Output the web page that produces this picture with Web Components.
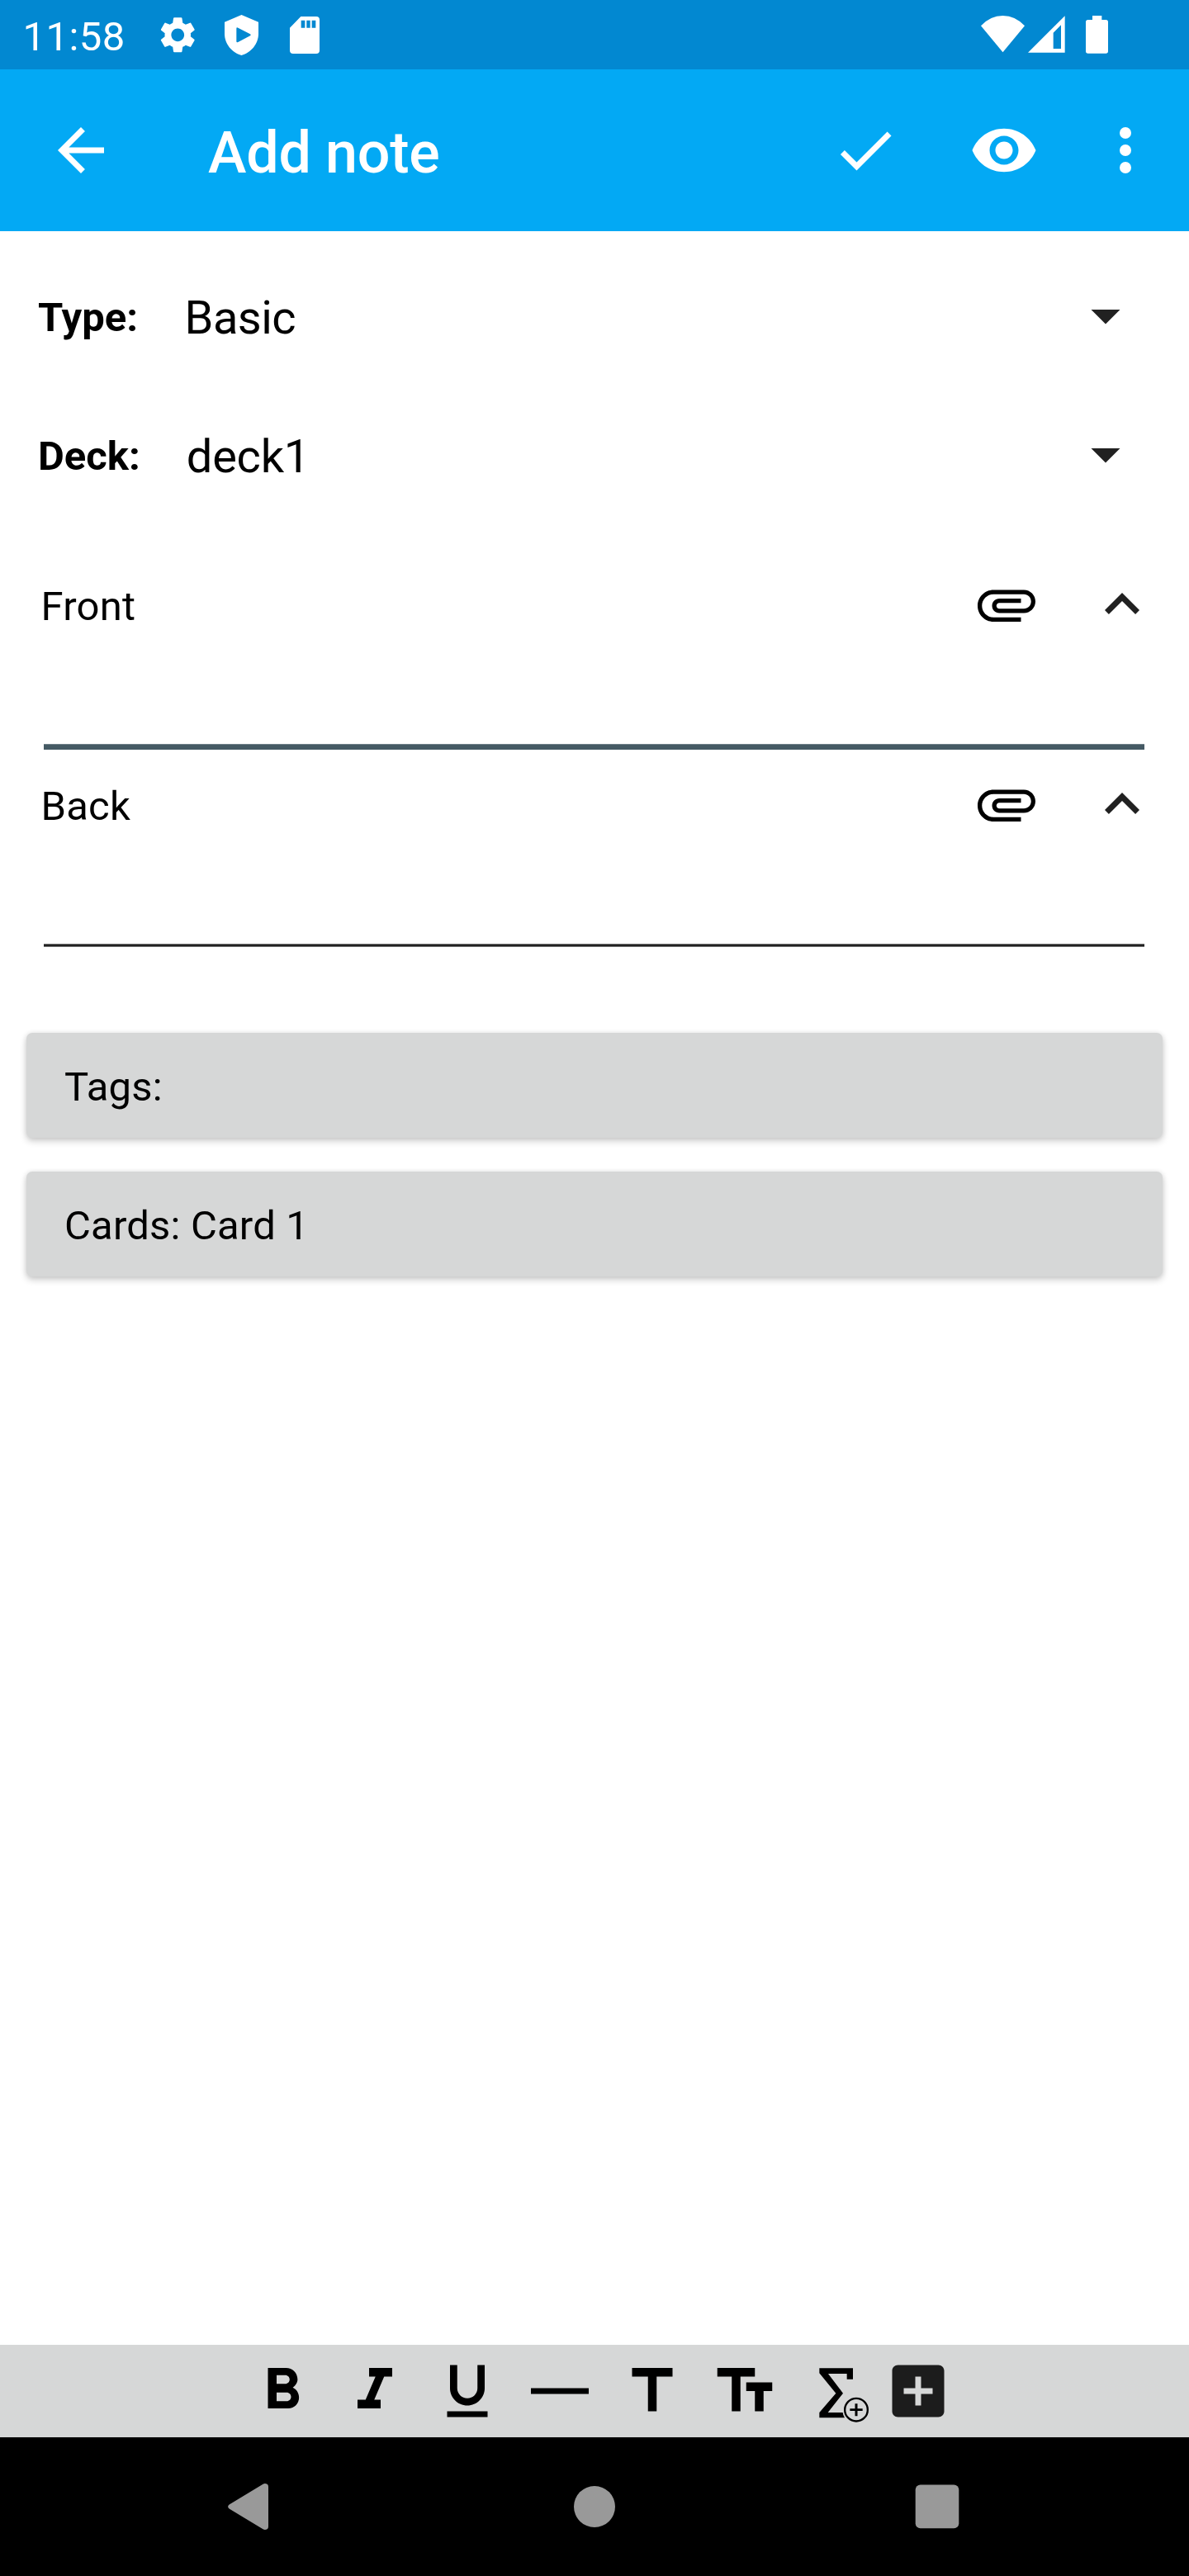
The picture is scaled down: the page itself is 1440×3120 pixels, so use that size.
<!DOCTYPE html>
<html lang="en">
<head>
<meta charset="utf-8">
<title>Add note</title>
<style>
html,body{margin:0;padding:0;background:#fff}
body{font-family:Roboto,"Liberation Sans",sans-serif;color:#000;width:1440px;height:3120px;overflow:hidden}
</style>
</head>
<body>
<note-editor></note-editor>
<script>
const ICONS = {
  gear: ['0 0 24 24', 52.5, 52.5, '<path d="M19.14 12.94c.04-.3.06-.61.06-.94 0-.32-.02-.64-.07-.94l2.03-1.58c.18-.14.23-.41.12-.61l-1.92-3.32c-.12-.22-.37-.29-.59-.22l-2.39.96c-.5-.38-1.03-.7-1.62-.94l-.36-2.54c-.04-.24-.24-.41-.48-.41h-3.84c-.24 0-.43.17-.47.41l-.36 2.54c-.59.24-1.13.57-1.62.94l-2.39-.96c-.22-.08-.47 0-.59.22L2.74 8.87c-.12.21-.08.47.12.61l2.03 1.58c-.05.3-.09.63-.09.94s.02.64.07.94l-2.03 1.58c-.18.14-.23.41-.12.61l1.92 3.32c.12.22.37.29.59.22l2.39-.96c.5.38 1.03.7 1.62.94l.36 2.54c.05.24.24.41.48.41h3.84c.24 0 .44-.17.47-.41l.36-2.54c.59-.24 1.13-.56 1.62-.94l2.39.96c.22.08.47 0 .59-.22l1.92-3.32c.12-.22.07-.47-.12-.61l-2.01-1.58zM12 15.6c-1.98 0-3.6-1.62-3.6-3.6s1.62-3.6 3.6-3.6 3.6 1.62 3.6 3.6-1.62 3.6-3.6 3.6z"/>'],
  shield: ['0 0 123 147', 41, 49, '<path fill-rule="evenodd" d="M61.500 0L123 26V69C123 105 96 138 61.500 147C27 138 0 105 0 69V26ZM43 50V96Q43 102 49 99L93 76Q98 73 93 70L49 47Q43 44 43 50Z"/>'],
  sd: ['0 0 108 135', 36, 45, '<path fill-rule="evenodd" d="M40 0H96Q108 0 108 12V123Q108 135 96 135H12Q0 135 0 123V41ZM41 14V41H55V14ZM61 14V41H74V14ZM80 14V41H94V14Z"/>'],
  wifi: ['0 0 159 135', 53, 45, '<path d="M79.500 133L0 37Q34 0 79.500 0T159 37Z"/>'],
  signal: ['0 0 135 135', 45, 45, '<path fill-rule="evenodd" d="M0 134L134 1V134ZM92 62V120H120V34Z"/>'],
  battery: ['0 0 81 138', 27, 46, '<path d="M24 0H58V15H73Q81 15 81 23V129Q81 137 73 137H8Q0 137 0 129V23Q0 15 8 15H24Z"/>'],
  back: ['0 0 24 24', 84, 84, '<path d="M20 11H7.830l5.590-5.590L12 4l-8 8 8 8 1.410-1.410L7.830 13H20z"/>'],
  check: ['0 0 24 24', 84, 84, '<path d="M9 16.170L4.830 12l-1.420 1.410L9 19 21 7l-1.410-1.410z"/>'],
  eye: ['0 0 24 24', 84, 84, '<path d="M12 4.500C7 4.500 2.730 7.610 1 12c1.730 4.390 6 7.500 11 7.500s9.270-3.110 11-7.500c-1.730-4.390-6-7.500-11-7.500zM12 17c-2.760 0-5-2.240-5-5s2.240-5 5-5 5 2.240 5 5-2.240 5-5 5zm0-8c-1.660 0-3 1.340-3 3s1.340 3 3 3 3-1.340 3-3-1.340-3-3-3z"/>'],
  more: ['0 0 24 24', 84, 84, '<circle cx="12" cy="6" r="2"/><circle cx="12" cy="12" r="2"/><circle cx="12" cy="18" r="2"/>'],
  drop: ['0 0 24 24', 84, 84, '<path d="M7 10l5 5 5-5z"/>'],
  clip: ['0 0 24 24', 84, 84, '<path d="M7.500 18C4.460 18 2 15.540 2 12.500S4.460 7 7.500 7H18c2.210 0 4 1.790 4 4s-1.790 4-4 4H9.500C8.120 15 7 13.880 7 12.500S8.120 10 9.500 10H17v1.500H9.500c-.55 0-1 .45-1 1s.45 1 1 1H18c1.380 0 2.500-1.120 2.500-2.500S19.380 8.500 18 8.500H7.500c-2.210 0-4 1.790-4 4s1.790 4 4 4H17V18z"/>'],
  up: ['0 0 24 24', 84, 84, '<path d="M12 8l-6 6 1.410 1.410L12 10.830l4.590 4.580L18 14z"/>'],
  bold: ['0 0 24 24', 84, 84, '<path d="M15.600 10.790c.97-.67 1.650-1.770 1.650-2.790 0-2.260-1.750-4-4-4H7v14h7.040c2.090 0 3.710-1.700 3.710-3.790 0-1.520-.86-2.820-2.150-3.420zM10 6.500h3c.83 0 1.500.67 1.500 1.500s-.67 1.500-1.500 1.500h-3zm3.500 9H10v-3h3.500c.83 0 1.500.67 1.500 1.500s-.67 1.500-1.500 1.500z"/>'],
  italic: ['0 0 24 24', 84, 84, '<path d="M10 4v3h2.210l-3.420 8H6v3h8v-3h-2.210l3.420-8H18V4z"/>'],
  underline: ['0 0 24 24', 84, 84, '<path d="M12 17c3.310 0 6-2.690 6-6V3h-2.500v8c0 1.930-1.570 3.500-3.500 3.500S8.500 12.930 8.500 11V3H6v8c0 3.310 2.690 6 6 6zm-7 2v2h14v-2z"/>'],
  rule: ['0 0 24 24', 84, 84, '<rect x="2" y="11" width="20" height="2"/>'],
  heading: ['0 0 24 24', 84, 84, '<path d="M5 4v3h5.500v12h3V7H19V4z"/>'],
  size: ['0 0 24 24', 84, 84, '<path d="M2.500 4v3h5v12h3V7h5V4zM21.500 9h-9v3h3v7h3v-7h3z"/>'],
  formula: ['756 102 252 252', 84, 84, '<path d="M817 145H939V185H917V165H849L903 236L848 306H902Q903 316 909 325H817V306L877 236L817 163Z"/><circle cx="951" cy="296" r="41.500" fill="none" stroke="currentColor" stroke-width="7"/><path d="M946.500 274h9v18h18.500v8h-18.500v19h-9v-19H928v-8h18.500z"/>'],
  add: ['0 0 24 24', 84, 84, '<path d="M19 3H5c-1.110 0-2 .9-2 2v14c0 1.100.89 2 2 2h14c1.100 0 2-.9 2-2V5c0-1.100-.9-2-2-2zm-2 10h-4v4h-2v-4H7v-2h4V7h2v4h4z"/>'],
  navback: ['0 0 84 84', 84, 84, '<path d="M19.600 39.500L60.500 14.700Q63 13 66 15Q67 16 67 18V66Q67 68 66 69Q63 71 60.500 69.300L19.600 44.500Q16.600 42 19.600 39.500Z"/>'],
  navhome: ['0 0 84 84', 84, 84, '<circle cx="42" cy="42" r="25"/>'],
  navrecent: ['0 0 84 84', 84, 84, '<rect x="10.700" y="15.500" width="52.600" height="52.800" rx="6"/>']
};

const define = (name, html, fill) => customElements.define(name, class extends HTMLElement {
  connectedCallback() {
    if (this.shadowRoot) return;
    this.attachShadow({mode: 'open'}).innerHTML = '<style>*{box-sizing:border-box}</style>' + html;
    if (fill) fill(this, this.shadowRoot);
  }
});

define('ui-icon', '<style>:host{display:block;flex:none}svg{display:block;fill:currentColor}</style><svg></svg>', (el, root) => {
  const [box, w, h, shape] = ICONS[el.getAttribute('name')];
  const svg = root.querySelector('svg');
  svg.setAttribute('viewBox', box);
  svg.setAttribute('width', w);
  svg.setAttribute('height', h);
  svg.innerHTML = shape;
});

define('status-bar', `<style>
  :host{display:flex;box-sizing:border-box;height:84px;background:#0288d1;color:#fff;padding:0 98px 0 27.500px;align-items:flex-start}
  .time{font-size:49px;line-height:84px;letter-spacing:.45px;padding-top:2.500px;width:161.700px}
  .gear{padding-top:16px;width:82.800px}
  .shield{padding-top:18px;width:79.500px}
  .sd{padding-top:20px;flex:1}
  .wifi{padding-top:19px;margin-right:4.300px}
  .signal{padding-top:19.300px;margin-right:24.700px}
  .battery{padding-top:19px}
</style>
<span class="time">11:58</span><ui-icon class="gear" name="gear"></ui-icon><ui-icon class="shield" name="shield"></ui-icon><ui-icon class="sd" name="sd"></ui-icon><ui-icon class="wifi" name="wifi"></ui-icon><ui-icon class="signal" name="signal"></ui-icon><ui-icon class="battery" name="battery"></ui-icon>`);

define('app-bar', `<style>
  :host{display:flex;box-sizing:border-box;height:196px;background:#03a9f4;color:#fff;padding:0 35px 0 56px;align-items:center}
  .title{flex:1;font-size:70px;font-weight:500;letter-spacing:-.2px;padding:6px 0 0 112px;line-height:84px}
  .actions{display:flex}
  .actions :nth-child(2){margin:0 63px 0 84px}
</style>
<ui-icon name="back"></ui-icon><span class="title"><slot></slot></span>
<div class="actions"><ui-icon name="check"></ui-icon><ui-icon name="eye"></ui-icon><ui-icon name="more"></ui-icon></div>`);

define('select-row', `<style>
  :host{display:flex;box-sizing:border-box;height:168px;align-items:center;padding:0 59.500px 0 46px}
  b{font-size:49px;line-height:84px;padding-top:5px;width:var(--label-width,177.500px)}
  .value{flex:1;font-size:56px;line-height:84px;padding-top:6px;letter-spacing:var(--value-spacing,-.5px)}
  ui-icon{color:#212121}
</style><b></b><span class="value"><slot></slot></span><ui-icon name="drop"></ui-icon>`,
  (el, root) => root.querySelector('b').textContent = el.getAttribute('label'));

define('note-field', `<style>
  :host{display:block;height:242px}
  .head{display:flex;height:84px;align-items:center;padding:0 39px 0 49.500px}
  .name{flex:1;font-size:49px;line-height:84px;letter-spacing:.2px;padding-top:5px}
  .up{color:#212121;margin-left:56px}
  .input{height:134px;margin:0 54px 0 53px;padding-top:127px}
  .line{height:4px;background:#212121;border:solid #707070;border-width:1px 0}
  :host([focused]) .line{height:7px;background:#455a64;border:0;border-top:1px solid #71818a}
</style>
<div class="head"><span class="name"><slot></slot></span><ui-icon name="clip"></ui-icon><ui-icon class="up" name="up"></ui-icon></div>
<div class="input"><div class="line"></div></div>`);

define('raised-button', `<style>
  :host{display:block;box-sizing:border-box;height:126.500px;padding:4px 46px 0;border-radius:7px;background:#d6d7d7;font-size:49px;letter-spacing:.18px;line-height:123px;box-shadow:0 4px 8px rgba(0,0,0,.2),0 0 6px rgba(0,0,0,.08)}
</style><slot></slot>`);

define('format-bar', `<style>
  :host{display:flex;box-sizing:border-box;height:112px;background:#d6d7d7;padding-left:300px;gap:28px;align-items:center}
  .add{color:#1c1c1c;margin-left:-14px}
</style>` + ['bold','italic','underline','rule','heading','size','formula'].map(n => `<ui-icon name="${n}"></ui-icon>`).join('') + '<ui-icon class="add" name="add"></ui-icon>');

define('nav-bar', `<style>
  :host{display:flex;height:168px;background:#000;color:#999;justify-content:center;align-items:center;gap:336px}
</style><ui-icon name="navback"></ui-icon><ui-icon name="navhome"></ui-icon><ui-icon name="navrecent"></ui-icon>`);

define('note-editor', `<style>
  :host{display:flex;flex-direction:column;width:1440px;height:3120px;background:#fff}
  main{flex:1;padding-top:18px}
  .deck{--label-width:179.800px;--value-spacing:-.25px}
  .fields{padding-top:56px}
  .buttons{display:flex;flex-direction:column;gap:41.500px;padding:77px 32px 0}
</style>
<status-bar></status-bar>
<app-bar>Add note</app-bar>
<main>
  <select-row label="Type:">Basic</select-row>
  <select-row class="deck" label="Deck:">deck1</select-row>
  <div class="fields"><note-field focused>Front</note-field><note-field>Back</note-field></div>
  <div class="buttons"><raised-button>Tags:</raised-button><raised-button>Cards: Card 1</raised-button></div>
</main>
<format-bar></format-bar>
<nav-bar></nav-bar>`);
</script>
</body>
</html>
